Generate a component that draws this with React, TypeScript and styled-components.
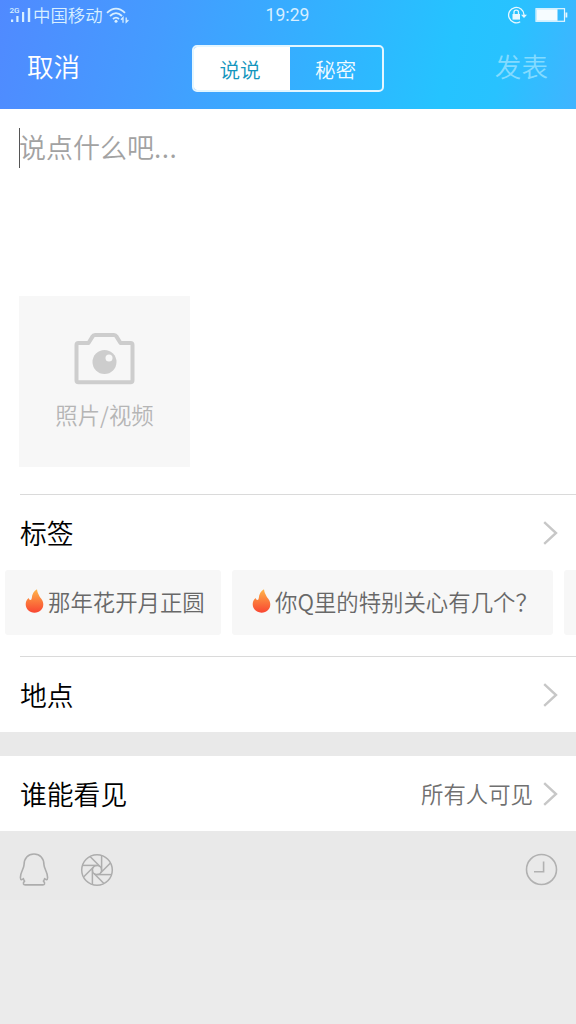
import React from "react";
import styled, { createGlobalStyle } from "styled-components";

const GlobalStyle = createGlobalStyle`
  * { box-sizing: border-box; }
  body {
    margin: 0;
    background: #ebebeb;
    font-family: Roboto, "Noto Sans CJK SC", sans-serif;
    font-weight: 400;
  }
`;

const Screen = styled.main`
  width: 576px;
  height: 1024px;
  overflow: hidden;
  display: flex;
  flex-direction: column;
  background: #ebebeb;
`;

const Header = styled.header`
  height: 109px;
  flex: none;
  color: #fff;
  background: linear-gradient(103deg, #508aff 0%, #449cff 28%, #34b0ff 53%, #25c3ff 77%, #28c2ff 86%, #40b4ff 100%);
`;

const StatusBar = styled.div`
  height: 30px;
  padding: 0 8px 0 9px;
  display: grid;
  grid-template-columns: 1fr auto 1fr;
  align-items: center;
  color: #d8efff;
`;

const StatusGroup = styled.div<{ $end?: boolean }>`
  display: flex;
  align-items: center;
  justify-content: ${(p) => (p.$end ? "flex-end" : "flex-start")};
  gap: ${(p) => (p.$end ? "7px" : "3px")};
`;

const Carrier = styled.span`
  margin-left: -1px;
  font: 350 17.4px/30px "Noto Sans CJK SC", sans-serif;
`;

const Clock = styled.span`
  margin-right: 2px;
  font: 400 17.5px/30px Roboto, sans-serif;
  letter-spacing: 0.1px;
`;

const NavBar = styled.nav`
  height: 79px;
  padding: 0 28px 3px 27px;
  display: flex;
  align-items: center;
  justify-content: space-between;
`;

const NavButton = styled.button<{ $dim?: boolean }>`
  width: 56px;
  padding: 0 0 5px;
  border: 0;
  background: none;
  text-align: ${(p) => (p.$dim ? "right" : "left")};
  color: ${(p) => (p.$dim ? "#83dbff" : "#fff")};
  font: 350 26.6px/40px "Noto Sans CJK SC", sans-serif;
`;

const Segmented = styled.div`
  width: 192px;
  height: 47px;
  display: flex;
  border: 2px solid #e4f6ff;
  border-radius: 5px;
  overflow: hidden;
`;

const Segment = styled.button<{ $active?: boolean }>`
  flex: ${(p) => (p.$active ? "0 0 96px" : "1")};
  padding: ${(p) => (p.$active ? "1px 3px 0 0" : "1px 0 0")};
  border: 0;
  background: ${(p) => (p.$active ? "#fff" : "transparent")};
  color: ${(p) => (p.$active ? "#1495bd" : "#f2fbff")};
  font: 350 20.6px/40px "Noto Sans CJK SC", sans-serif;
`;

const Editor = styled.section`
  height: 385px;
  flex: none;
  padding: 19px 19px 0;
  background: #fff;
`;

const Prompt = styled.div`
  height: 168px;
  display: flex;
  align-items: flex-start;
  color: #a2a2a2;
  font: 350 27px/38px "Noto Sans CJK SC", sans-serif;
`;

const Caret = styled.span`
  width: 1px;
  height: 40px;
  margin-right: -1px;
  background: #555;
`;

const Ellipsis = styled.span`
  letter-spacing: 0.5px;
`;

const MediaTile = styled.button`
  width: 171px;
  height: 171px;
  padding: 36px 0 0;
  border: 0;
  display: flex;
  flex-direction: column;
  align-items: center;
  gap: 11px;
  background: #f7f7f7;
  color: #b5b5b5;
  font: 350 22.4px/34px "Noto Sans CJK SC", sans-serif;
`;

const Panel = styled.section`
  flex: none;
  background: #fff;
`;

const Divider = styled.hr`
  height: 1px;
  margin: 0 0 0 20px;
  border: 0;
  background: #dadada;
`;

const Row = styled.div`
  height: 75px;
  padding: 0 18px 0 20px;
  display: flex;
  align-items: center;
`;

const RowTitle = styled.h2`
  margin: 0;
  flex: 1;
  color: #000;
  font: 350 26.8px/40px "Noto Sans CJK SC", sans-serif;
`;

const RowValue = styled.span`
  margin-right: 10px;
  padding-bottom: 1px;
  color: #707070;
  font: 350 22.4px/34px "Noto Sans CJK SC", sans-serif;
`;

const TagStrip = styled.div`
  height: 86px;
  padding-left: 5px;
  display: flex;
  gap: 11px;
  overflow: hidden;
`;

const Tag = styled.div<{ $width: number }>`
  flex: none;
  width: ${(p) => p.$width}px;
  height: 65px;
  padding: 0 0 3px 20px;
  display: flex;
  align-items: center;
  gap: 4px;
  border-radius: 3px;
  background: #f7f7f7;
  color: #686868;
  white-space: nowrap;
  font: 350 22.4px/34px "Noto Sans CJK SC", sans-serif;
`;

const Gap = styled.div`
  height: 24px;
  flex: none;
  background: #e9e9e9;
`;

const Toolbar = styled.footer`
  height: 69px;
  flex: none;
  padding: 8px 18px 0 18px;
  display: flex;
  align-items: center;
  gap: 30px;
  background: #e9e9e9;
`;

const Spacer = styled.span`
  flex: 1;
`;

const SignalIcon = () => (
  <svg width="22" height="20" viewBox="0 0 22 20">
    <g fill="#d8efff">
      <rect x="2" y="14.5" width="2.2" height="2.5" />
      <rect x="7.3" y="11" width="2.2" height="6" />
      <rect x="13" y="7" width="2.2" height="10" />
      <rect x="18.8" y="3" width="2.4" height="14" />
      <text x="0.4" y="8" fontSize="8" fontWeight="500" fontFamily="Roboto, sans-serif">2G</text>
    </g>
  </svg>
);

const WifiIcon = () => (
  <svg width="24" height="18" viewBox="0 0 24 18" fill="none" stroke="#d8efff" strokeWidth="1.8">
    <path d="M1 6.8Q10 -1.6 19 6.8M4 10Q10 4.2 16 10M7 13Q10 10.2 13 13" />
    <circle cx="10" cy="15.3" r="1.5" fill="#d8efff" stroke="none" />
    <path d="M17 16.8V11.6L15 13.8M20.2 11.4V16.2L22.4 14" strokeWidth="1.3" />
  </svg>
);

const LockIcon = () => (
  <svg width="21" height="18" viewBox="0 0 21 18" fill="none" stroke="#e6f7ff" strokeWidth="1.3">
    <path d="M13.2 15.7A7.7 7.7 0 1 1 17 8.7V10" />
    <path d="M14 8.8H20L17 12Z" fill="#e6f7ff" stroke="none" />
    <rect x="5.5" y="8" width="7.5" height="5.6" fill="#e6f7ff" stroke="none" />
    <path d="M7 8V6.2Q7 4.2 9.2 4.2Q11.5 4.2 11.5 6.2V8" />
  </svg>
);

const BatteryIcon = () => (
  <svg width="33" height="14" viewBox="0 0 33 14">
    <rect x="1" y="0.7" width="28.5" height="12.6" fill="none" stroke="#e6f7ff" strokeWidth="1.2" />
    <rect x="1.5" y="1.2" width="21" height="11.6" fill="#f6fcff" />
    <rect x="30.5" y="4.5" width="1.8" height="5" fill="#e6f7ff" />
  </svg>
);

const CameraIcon = () => (
  <svg width="62" height="54" viewBox="0 0 62 54">
    <path
      d="M4.5 11H14.5L18.6 4.4Q19.3 3 21 3H40Q41.7 3 42.4 4.4L46.5 11H56.5Q58.5 11 58.5 13V48.3Q58.5 50.3 56.5 50.3H4.5Q2.5 50.3 2.5 48.3V13Q2.5 11 4.5 11Z"
      fill="none"
      stroke="#cdcdcd"
      strokeWidth="4"
      strokeLinejoin="round"
    />
    <circle cx="30.5" cy="30" r="12" fill="#cdcdcd" />
    <circle cx="35" cy="26" r="3.5" fill="#f7f7f7" />
  </svg>
);

const ChevronIcon = () => (
  <svg width="15" height="24" viewBox="0 0 15 24" fill="none" stroke="#c7c7c7" strokeWidth="2.4">
    <path d="M1.2 1.2L13 12L1.2 22.8" />
  </svg>
);

const FlameIcon = () => (
  <svg width="19" height="24" viewBox="0 0 19 24">
    <defs>
      <linearGradient id="flame" x1="0" y1="0" x2="0" y2="1">
        <stop offset="0" stopColor="#ffb549" />
        <stop offset="0.5" stopColor="#fb7b3c" />
        <stop offset="1" stopColor="#f94632" />
      </linearGradient>
    </defs>
    <path
      d="M12 0.3C9 2 7 5.1 6.8 9Q6.6 11 5.5 11Q4 11 3.6 8.9C1.4 10.9.7 12.9.7 15.3C.7 20.1 4.5 23.7 9.5 23.7C14.7 23.7 18.3 20.2 18.3 15.3C18.3 11.4 16.2 10 14.6 7.4C13.2 5 12.3 3 12 .3Z"
      fill="url(#flame)"
    />
  </svg>
);

const PenguinIcon = () => (
  <svg width="32" height="34" viewBox="0 0 32 34" fill="none" stroke="#adadad" strokeWidth="1.6" strokeLinejoin="round">
    <path d="M6 12C6 5.5 10 1 16 1S26 5.5 26 12C26 15.5 29.8 19.5 29.6 24.5C29.5 27.3 28 27.3 26.6 25.6C26.4 26.4 26 27.3 25.4 28.2C26.4 28.8 26.8 29.8 26.5 31C26.3 31.7 25.6 31.9 24.8 31.9H7.2C6.4 31.9 5.7 31.7 5.5 31C5.2 29.8 5.6 28.8 6.6 28.2C6 27.3 5.6 26.4 5.4 25.6C4 27.3 2.5 27.3 2.4 24.5C2.2 19.5 6 15.5 6 12Z" />
  </svg>
);

const ApertureIcon = () => (
  <svg width="34" height="34" viewBox="0 0 34 34" fill="none" stroke="#adadad" strokeWidth="1.5">
    <circle cx="17" cy="17" r="15.3" />
    <circle cx="17" cy="17" r="4.6" />
    {[0, 45, 90, 135, 180, 225, 270, 315].map((angle) => (
      <path key={angle} d="M21.6 17V2.6" transform={`rotate(${angle} 17 17)`} />
    ))}
  </svg>
);

const ClockIcon = () => (
  <svg width="33" height="33" viewBox="0 0 33 33" fill="none" stroke="#b1b1b1" strokeWidth="1.6">
    <circle cx="16.5" cy="16.5" r="15" />
    <path d="M18.6 8.5V18.7H9" />
  </svg>
);

export default function App() {
  return (
    <>
      <GlobalStyle />
      <Screen>
        <Header>
          <StatusBar>
            <StatusGroup>
              <SignalIcon />
              <Carrier>中国移动</Carrier>
              <WifiIcon />
            </StatusGroup>
            <Clock>19:29</Clock>
            <StatusGroup $end>
              <LockIcon />
              <BatteryIcon />
            </StatusGroup>
          </StatusBar>
          <NavBar>
            <NavButton>取消</NavButton>
            <Segmented>
              <Segment $active>说说</Segment>
              <Segment>秘密</Segment>
            </Segmented>
            <NavButton $dim>发表</NavButton>
          </NavBar>
        </Header>
        <Editor>
          <Prompt>
            <Caret />
            说点什么吧<Ellipsis>...</Ellipsis>
          </Prompt>
          <MediaTile>
            <CameraIcon />
            照片/视频
          </MediaTile>
        </Editor>
        <Panel>
          <Divider />
          <Row>
            <RowTitle>标签</RowTitle>
            <ChevronIcon />
          </Row>
          <TagStrip>
            <Tag $width={216}>
              <FlameIcon />
              那年花开月正圆
            </Tag>
            <Tag $width={321}>
              <FlameIcon />
              你Q里的特别关心有几个？
            </Tag>
            <Tag $width={100} />
          </TagStrip>
          <Divider />
          <Row>
            <RowTitle>地点</RowTitle>
            <ChevronIcon />
          </Row>
        </Panel>
        <Gap />
        <Panel>
          <Row>
            <RowTitle>谁能看见</RowTitle>
            <RowValue>所有人可见</RowValue>
            <ChevronIcon />
          </Row>
        </Panel>
        <Toolbar>
          <PenguinIcon />
          <ApertureIcon />
          <Spacer />
          <ClockIcon />
        </Toolbar>
      </Screen>
    </>
  );
}
